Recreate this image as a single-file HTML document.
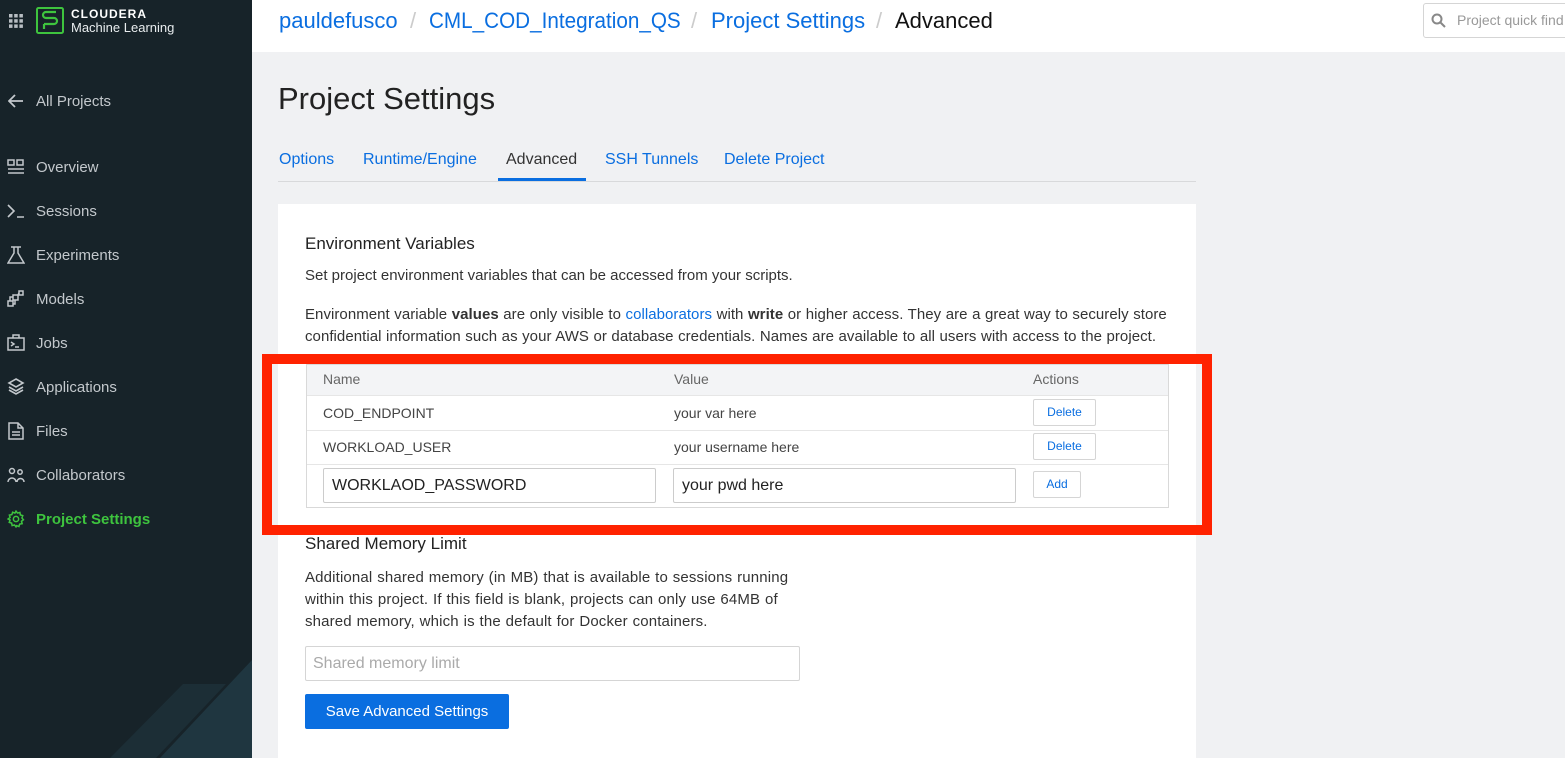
<!DOCTYPE html>
<html><head><meta charset="utf-8"><style>
*{margin:0;padding:0;box-sizing:border-box}
html,body{width:1565px;height:758px;overflow:hidden}
body{background:#f0f1f3;font-family:"Liberation Sans",Arial,sans-serif;position:relative}
.a{position:absolute;white-space:nowrap}
#sb{position:absolute;left:0;top:0;width:252px;height:758px;background:#172329;overflow:hidden}
.nav{position:absolute;left:36px;font-size:15px;color:#c3c8cc;line-height:18px}
.ic{position:absolute;left:7px}
.blue{color:#0a6ee0}
</style></head><body>
<div id="sb">
  <svg class="a" style="left:8px;top:13px" width="16" height="16" viewBox="0 0 16 16" fill="#b8bec3"><rect x="1" y="1" width="3.5" height="3.5"/><rect x="6.2" y="1" width="3.5" height="3.5"/><rect x="11.4" y="1" width="3.5" height="3.5"/><rect x="1" y="6.2" width="3.5" height="3.5"/><rect x="6.2" y="6.2" width="3.5" height="3.5"/><rect x="11.4" y="6.2" width="3.5" height="3.5"/><rect x="1" y="11.4" width="3.5" height="3.5"/><rect x="6.2" y="11.4" width="3.5" height="3.5"/><rect x="11.4" y="11.4" width="3.5" height="3.5"/></svg>
  <svg class="a" style="left:36px;top:7px" width="28" height="27" viewBox="0 0 28 27"><rect x="1" y="1" width="26" height="25" rx="1.5" fill="none" stroke="#3ec43e" stroke-width="2"/><path d="M20 5H10a3 3 0 0 0 0 6h8a3 3 0 0 1 0 6H8" fill="none" stroke="#3ec43e" stroke-width="2.2"/><path d="M8 17v5" stroke="#3ec43e" stroke-width="2.2"/></svg>
  <div class="a" style="left:71px;top:7px;font-size:12px;font-weight:bold;color:#fff;letter-spacing:1px">CLOUDERA</div>
  <div class="a" style="left:71px;top:20px;font-size:13px;color:#e8ecee">Machine Learning</div>
  <svg class="a" style="left:8px;top:94px" width="16" height="14" viewBox="0 0 16 14"><path d="M15 7H2M7 1L1 7l6 6" fill="none" stroke="#c3c8cc" stroke-width="1.8"/></svg>
  <div class="nav" style="top:93px">All Projects</div>
  <svg class="ic" style="top:159px" width="18" height="16" viewBox="0 0 18 16" fill="none" stroke="#c3c8cc" stroke-width="1.5"><rect x="1" y="1" width="6" height="5"/><rect x="10" y="1" width="6" height="5"/><path d="M1 10h16M1 14h16"/></svg>
  <div class="nav" style="top:159px">Overview</div>
  <svg class="ic" style="top:204px" width="18" height="14" viewBox="0 0 18 14" fill="none" stroke="#c3c8cc" stroke-width="1.6"><path d="M1 1l6 6-6 6M10 13h7"/></svg>
  <div class="nav" style="top:203px">Sessions</div>
  <svg class="ic" style="top:246px" width="18" height="18" viewBox="0 0 18 18" fill="none" stroke="#c3c8cc" stroke-width="1.5"><path d="M4 1h10M7 1v6L1 17h16L11 7V1"/></svg>
  <div class="nav" style="top:247px">Experiments</div>
  <svg class="ic" style="top:290px" width="18" height="18" viewBox="0 0 18 18" fill="none" stroke="#c3c8cc" stroke-width="1.5"><rect x="1" y="11" width="5" height="5"/><rect x="6" y="5" width="5" height="5"/><rect x="12" y="1" width="4" height="4"/><path d="M3 11V7h3M11 5l1-2M8 10v4H6"/></svg>
  <div class="nav" style="top:291px">Models</div>
  <svg class="ic" style="top:334px" width="18" height="17" viewBox="0 0 18 17" fill="none" stroke="#c3c8cc" stroke-width="1.5"><rect x="1" y="4" width="16" height="12"/><path d="M6 4V1h6v3M4 8l3 2-3 2M8 13h4"/></svg>
  <div class="nav" style="top:335px">Jobs</div>
  <svg class="ic" style="top:378px" width="18" height="17" viewBox="0 0 18 17" fill="none" stroke="#c3c8cc" stroke-width="1.6"><path d="M9 1l7 4-7 4-7-4zM2 9l7 4 7-4M2 12l7 4 7-4"/></svg>
  <div class="nav" style="top:379px">Applications</div>
  <svg class="ic" style="top:422px" width="18" height="18" viewBox="0 0 18 18" fill="none" stroke="#c3c8cc" stroke-width="1.5"><path d="M2 1h9l5 5v11H2zM11 1v5h5M5 10h8M5 13h8"/></svg>
  <div class="nav" style="top:423px">Files</div>
  <svg class="ic" style="top:467px" width="18" height="16" viewBox="0 0 18 16" fill="none" stroke="#c3c8cc" stroke-width="1.5"><circle cx="5" cy="4" r="2.5"/><circle cx="13" cy="5" r="2.2"/><path d="M1 15a4 4 0 0 1 8 0M10 15a3.5 3.5 0 0 1 7 0"/></svg>
  <div class="nav" style="top:467px">Collaborators</div>
  <svg class="ic" style="top:510px" width="18" height="18" viewBox="0 0 24 24" fill="none" stroke="#3ec43e" stroke-width="2"><circle cx="12" cy="12" r="3.5"/><path d="M12 1.5l2 2.6 3.2-.9.6 3.3 3.2 1-1.1 3.1 2 2.4-2.6 2 .9 3.2-3.3.6-1 3.2-3.1-1.1L12 22.5l-2-2.6-3.2.9-.6-3.3-3.2-1 1.1-3.1L1.5 12l2.6-2-.9-3.2 3.3-.6 1-3.2 3.1 1.1z"/></svg>
  <div class="nav" style="top:511px;color:#3ec43e;font-weight:bold">Project Settings</div>
  <svg class="a" style="left:0;top:0" width="252" height="758"><polygon points="252,660 160,758 252,758" fill="#1f3640"/><polygon points="183,684 226,684 156,758 110,758" fill="#1c2e36"/></svg>
</div>
<div class="a" style="left:252px;top:0;width:1313px;height:52px;background:#fff"></div>
<div class="a blue" style="left:279px;top:8px;font-size:22px">pauldefusco</div>
<div class="a" style="left:410px;top:8px;font-size:22px;color:#ccc">/</div>
<div class="a blue" style="left:429px;top:8px;font-size:22px;transform:scaleX(0.94);transform-origin:0 0">CML_COD_Integration_QS</div>
<div class="a" style="left:691px;top:8px;font-size:22px;color:#ccc">/</div>
<div class="a blue" style="left:711px;top:8px;font-size:22px">Project Settings</div>
<div class="a" style="left:876px;top:8px;font-size:22px;color:#ccc">/</div>
<div class="a" style="left:895px;top:8px;font-size:22px;color:#111">Advanced</div>
<div class="a" style="left:1423px;top:3px;width:150px;height:35px;border:1px solid #d5d5d5;border-radius:3px;background:#fff"></div>
<svg class="a" style="left:1431px;top:13px" width="15" height="15" viewBox="0 0 15 15" fill="none" stroke="#888" stroke-width="2"><circle cx="6" cy="6" r="4.5"/><path d="M9.5 9.5L14 14"/></svg>
<div class="a" style="left:1457px;top:12px;font-size:14px;color:#999">Project quick find</div>
<div class="a" style="left:278px;top:81px;font-size:31px;color:#222">Project Settings</div>
<div class="a blue" style="left:279px;top:151px;font-size:16px">Options</div>
<div class="a blue" style="left:363px;top:151px;font-size:16px">Runtime/Engine</div>
<div class="a" style="left:506px;top:151px;font-size:16px;color:#333">Advanced</div>
<div class="a blue" style="left:605px;top:151px;font-size:16px">SSH Tunnels</div>
<div class="a blue" style="left:724px;top:151px;font-size:16px">Delete Project</div>
<div class="a" style="left:278px;top:181px;width:918px;height:1px;background:#d8d9db"></div>
<div class="a" style="left:498px;top:178px;width:88px;height:3px;background:#0a6ee0"></div>
<div class="a" style="left:278px;top:204px;width:918px;height:560px;background:#fff"></div>
<div class="a" style="left:305px;top:234px;font-size:17px;color:#222">Environment Variables</div>
<div class="a" style="left:305px;top:267px;font-size:15px;color:#333">Set project environment variables that can be accessed from your scripts.</div>
<div class="a" style="left:305px;top:304px;font-size:15px;color:#333;line-height:22px;letter-spacing:0.05px;word-spacing:0.3px">Environment variable <b>values</b> are only visible to <span class="blue">collaborators</span> with <b>write</b> or higher access. They are a great way to securely store<br>confidential information such as your AWS or database credentials. Names are available to all users with access to the project.</div>
<div class="a" style="left:306px;top:364px;width:863px;height:144px;border:1px solid #d9d9d9"></div>
<div class="a" style="left:307px;top:365px;width:861px;height:31px;background:#f3f4f6;border-bottom:1px solid #e6e6e6"></div>
<div class="a" style="left:307px;top:430px;width:861px;height:1px;background:#e6e6e6"></div>
<div class="a" style="left:307px;top:464px;width:861px;height:1px;background:#e6e6e6"></div>
<div class="a" style="left:323px;top:371px;font-size:14px;color:#666">Name</div>
<div class="a" style="left:674px;top:371px;font-size:14px;color:#666">Value</div>
<div class="a" style="left:1033px;top:371px;font-size:14px;color:#666">Actions</div>
<div class="a" style="left:323px;top:405px;font-size:14px;color:#444">COD_ENDPOINT</div>
<div class="a" style="left:674px;top:405px;font-size:14px;color:#444">your var here</div>
<div class="a" style="left:323px;top:439px;font-size:14px;color:#444">WORKLOAD_USER</div>
<div class="a" style="left:674px;top:439px;font-size:14px;color:#444">your username here</div>
<div class="a blue" style="left:1033px;top:399px;width:63px;height:27px;border:1px solid #d5d5d5;border-radius:2px;font-size:12px;text-align:center;line-height:25px;background:#fff">Delete</div>
<div class="a blue" style="left:1033px;top:433px;width:63px;height:27px;border:1px solid #d5d5d5;border-radius:2px;font-size:12px;text-align:center;line-height:25px;background:#fff">Delete</div>
<div class="a" style="left:323px;top:468px;width:333px;height:35px;border:1px solid #ccc;border-radius:2px;font-size:16px;color:#222;padding-left:8px;line-height:33px">WORKLAOD_PASSWORD</div>
<div class="a" style="left:673px;top:468px;width:343px;height:35px;border:1px solid #ccc;border-radius:2px;font-size:16px;color:#222;padding-left:8px;line-height:33px">your pwd here</div>
<div class="a blue" style="left:1033px;top:471px;width:48px;height:27px;border:1px solid #d5d5d5;border-radius:2px;font-size:12px;text-align:center;line-height:25px">Add</div>
<div class="a" style="left:262px;top:354px;width:950px;height:181px;border:10px solid #ff2200"></div>
<div class="a" style="left:305px;top:534px;font-size:17px;color:#222">Shared Memory Limit</div>
<div class="a" style="left:305px;top:567px;font-size:15px;color:#333;line-height:22px;letter-spacing:0.15px;word-spacing:0.5px">Additional shared memory (in MB) that is available to sessions running<br>within this project. If this field is blank, projects can only use 64MB of<br>shared memory, which is the default for Docker containers.</div>
<div class="a" style="left:305px;top:646px;width:495px;height:35px;border:1px solid #d5d5d5;border-radius:2px;font-size:16px;color:#aaa;padding-left:7px;line-height:33px">Shared memory limit</div>
<div class="a" style="left:305px;top:694px;width:204px;height:35px;background:#0a6ee0;border-radius:2px;color:#fff;font-size:15px;text-align:center;line-height:35px">Save Advanced Settings</div>
</body></html>
